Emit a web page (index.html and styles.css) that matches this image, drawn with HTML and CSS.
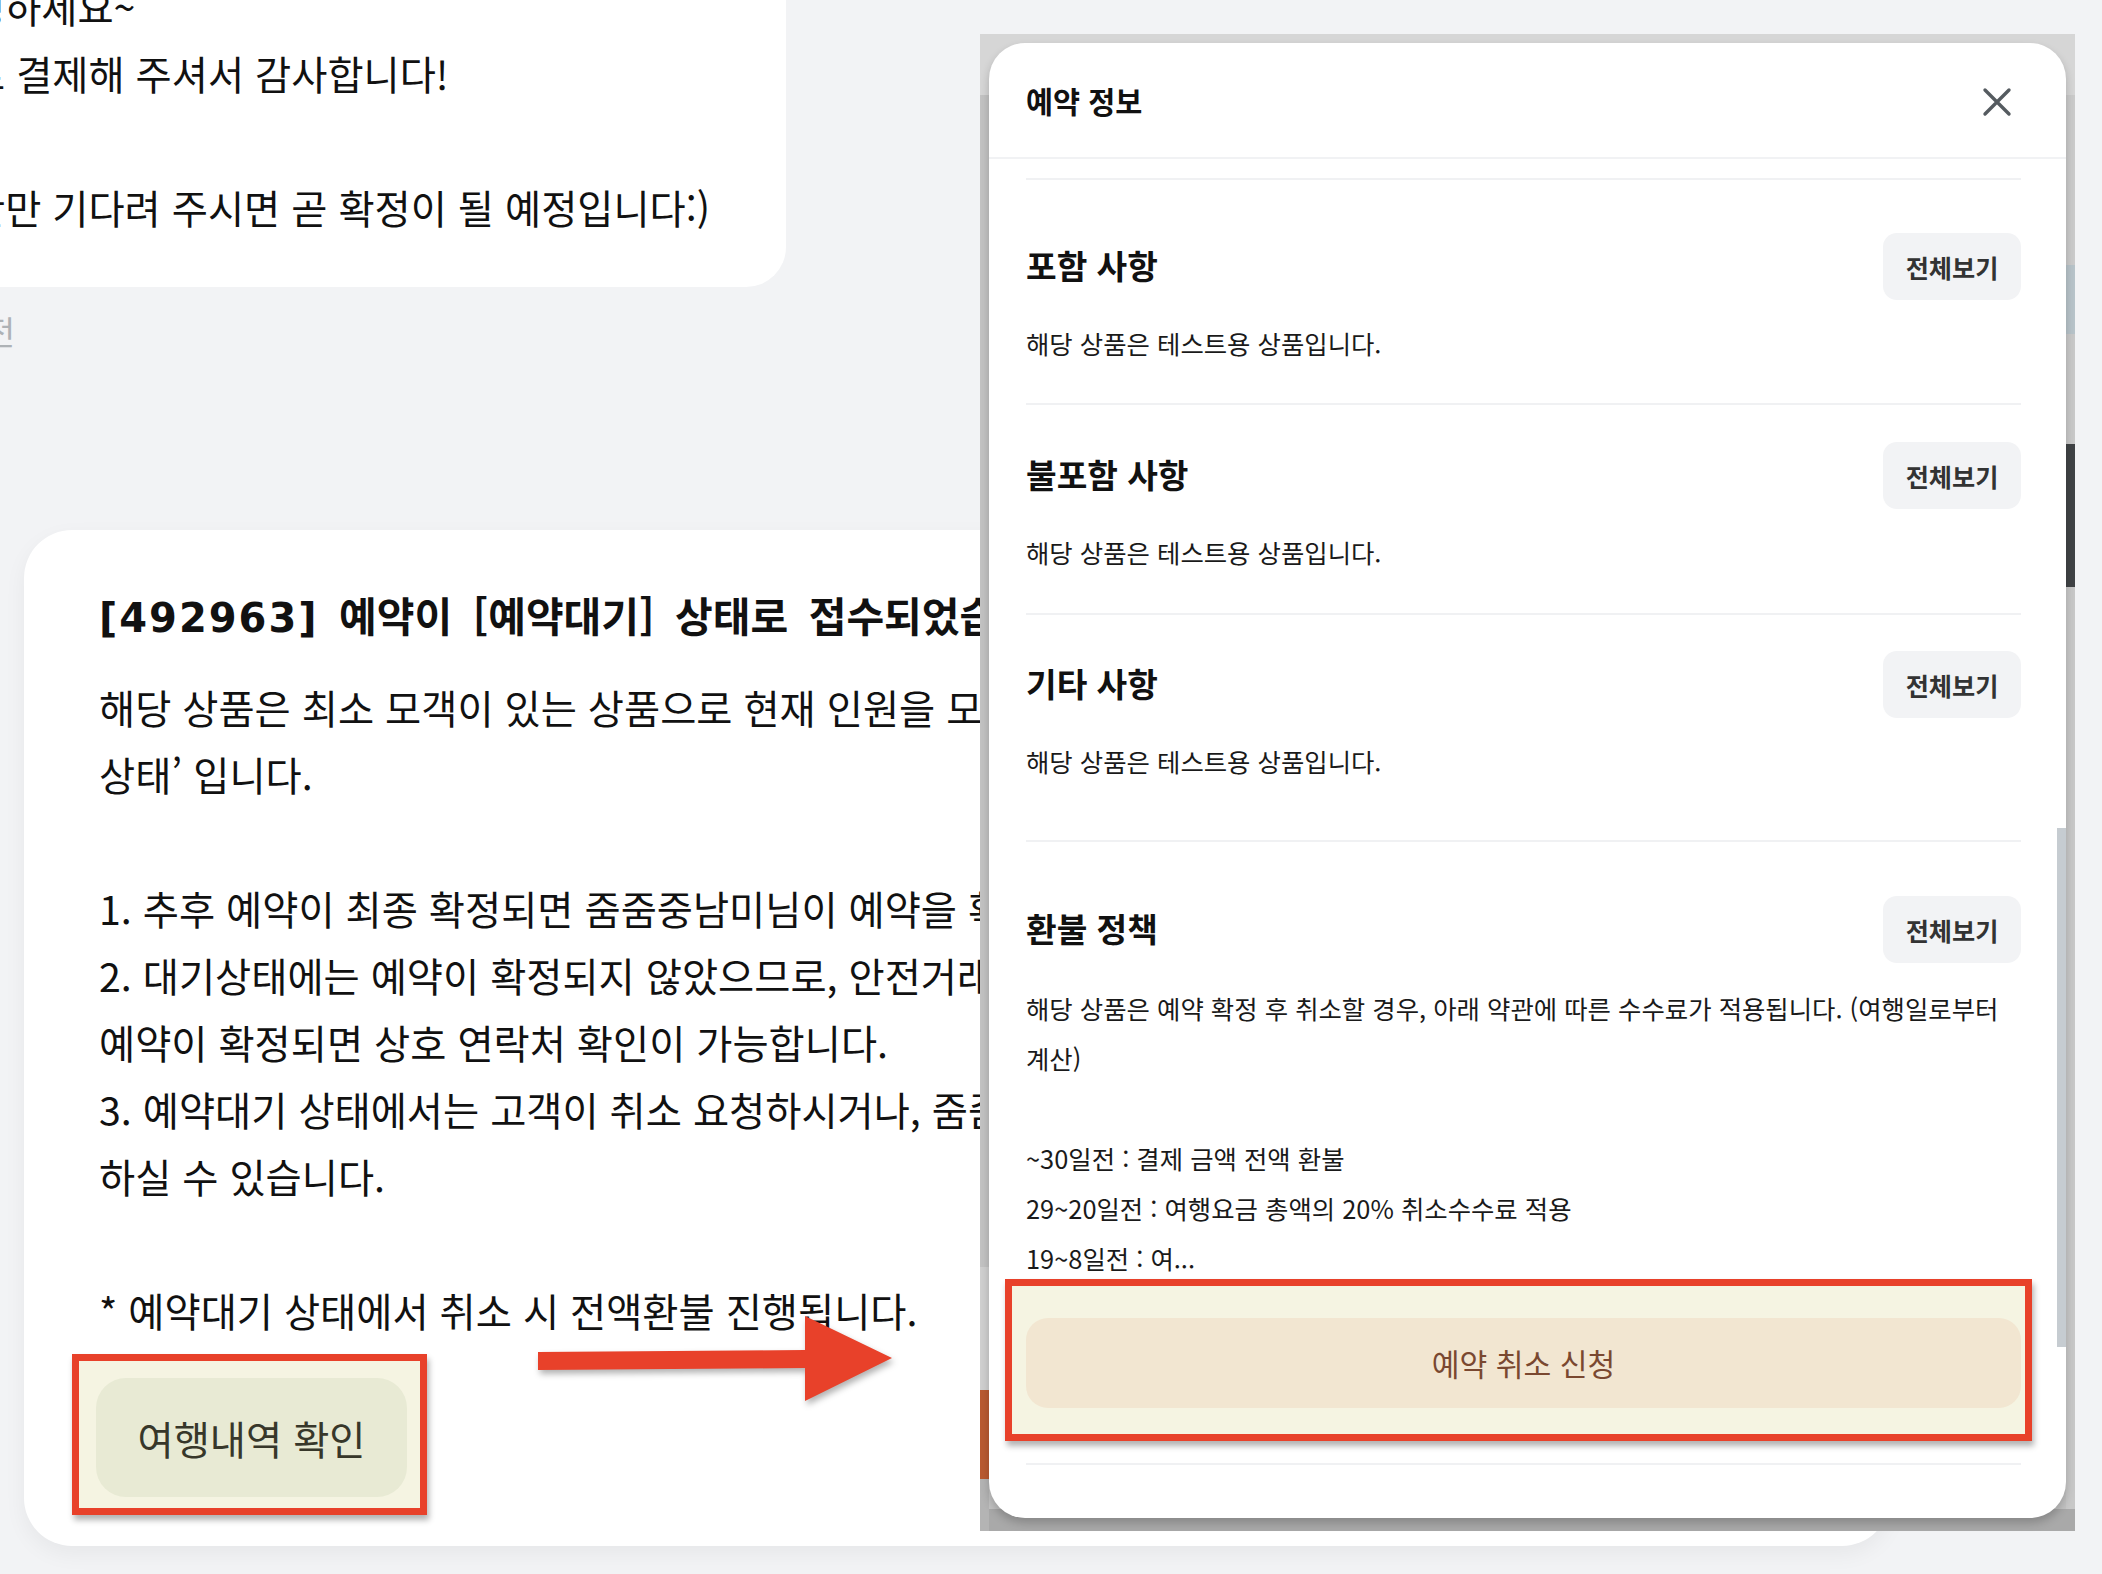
FILE: index.html
```html
<!DOCTYPE html>
<html lang="ko">
<head>
<meta charset="utf-8">
<title>예약 정보</title>
<link rel="stylesheet" href="styles.css">
</head>
<body>
<div class="page">
  <div class="chat">
    <div class="bubble">
      <p class="line">녕하세요~</p>
      <p class="line">로 결제해 주셔서 감사합니다!</p>
      <p class="line">&nbsp;</p>
      <p class="line">깐만 기다려 주시면 곧 확정이 될 예정입니다:)</p>
    </div>
    <div class="time">1분 전</div>
    <div class="card">
      <h2 class="card-title"><span class="num">[492963]</span> 예약이 [예약대기] 상태로 접수되었습니다.</h2>
      <div class="card-body">
        <p class="line">해당 상품은 최소 모객이 있는 상품으로 현재 인원을 모집 중인 ‘예약대기</p>
        <p class="line">상태’ 입니다.</p>
        <p class="line">&nbsp;</p>
        <p class="line">1. 추후 예약이 최종 확정되면 줌줌중남미님이 예약을 확정하였다는 알림을 드립니다.</p>
        <p class="line">2. 대기상태에는 예약이 확정되지 않았으므로, 안전거래를 위해 연락처가 공개되지 않습니다.</p>
        <p class="line">예약이 확정되면 상호 연락처 확인이 가능합니다.</p>
        <p class="line">3. 예약대기 상태에서는 고객이 취소 요청하시거나, 줌줌중남미님이 예약을 취소</p>
        <p class="line">하실 수 있습니다.</p>
        <p class="line">&nbsp;</p>
        <p class="line">* 예약대기 상태에서 취소 시 전액환불 진행됩니다.</p>
      </div>
      <div class="mark mark-trip">
        <div class="trip-btn">여행내역 확인</div>
      </div>
    </div>
  </div>

  <svg class="arrow" width="380" height="115" viewBox="0 0 380 115">
    <polygon points="8,49 275,47 275,13 362,55 275,98 275,65 8,67" fill="#e8412a"/>
  </svg>

  <div class="shot">
    <div class="shot-left"></div>
    <div class="shot-right"></div>
    <div class="modal">
      <div class="modal-head">
        <h3 class="modal-title">예약 정보</h3>
        <svg class="close" width="30" height="30" viewBox="0 0 30 30">
          <path d="M3 3 L27 27 M27 3 L3 27" stroke="#555b60" stroke-width="3.4" stroke-linecap="round" fill="none"/>
        </svg>
      </div>
      <div class="modal-body">
        <div class="sec sec-1">
          <div class="sec-head">
            <h4 class="sec-title">포함 사항</h4>
            <div class="more">전체보기</div>
          </div>
          <div class="sec-text">해당 상품은 테스트용 상품입니다.</div>
        </div>
        <div class="sec sec-2">
          <div class="sec-head">
            <h4 class="sec-title">불포함 사항</h4>
            <div class="more">전체보기</div>
          </div>
          <div class="sec-text">해당 상품은 테스트용 상품입니다.</div>
        </div>
        <div class="sec sec-3">
          <div class="sec-head">
            <h4 class="sec-title">기타 사항</h4>
            <div class="more">전체보기</div>
          </div>
          <div class="sec-text">해당 상품은 테스트용 상품입니다.</div>
        </div>
        <div class="sec sec-4">
          <div class="sec-head">
            <h4 class="sec-title">환불 정책</h4>
            <div class="more">전체보기</div>
          </div>
          <div class="sec-text">
            <p class="line">해당 상품은 예약 확정 후 취소할 경우, 아래 약관에 따른 수수료가 적용됩니다. (여행일로부터</p>
            <p class="line">계산)</p>
            <p class="line">&nbsp;</p>
            <p class="line">~30일전 : 결제 금액 전액 환불</p>
            <p class="line">29~20일전 : 여행요금 총액의 20% 취소수수료 적용</p>
            <p class="line">19~8일전 : 여...</p>
          </div>
          <div class="mark mark-cancel">
            <div class="cancel-btn">예약 취소 신청</div>
          </div>
          <div class="end-line"></div>
        </div>
      </div>
      <div class="scroll-thumb"></div>
    </div>
  </div>
</div>
</body>
</html>
```

FILE: styles.css
```css
* { box-sizing: border-box; }

html, body {
  margin: 0;
  padding: 0;
}

body {
  background: #f2f3f5;
  font-family: "Noto Sans CJK KR", "Noto Sans", sans-serif;
  color: #111;
}

.page {
  position: relative;
  width: 2102px;
  height: 1574px;
  overflow: hidden;
}

.chat {
  display: flex;
  flex-direction: column;
  align-items: flex-start;
}

.line {
  margin: 0;
  white-space: nowrap;
}

/* first (older) chat bubble, partly scrolled out of view */
.bubble {
  width: 886px;
  margin: -68px 0 0 -100px;
  padding: 40px 0 47px 69px;
  background: #fff;
  border-radius: 40px;
  font-size: 39.3px;
  line-height: 67px;
  color: #111;
}

.time {
  width: 200px;
  margin: 22px 0 0 -185px;
  text-align: right;
  font-size: 33px;
  line-height: 45px;
  color: #aeb2b6;
}

/* system message card */
.card {
  width: 1866px;
  height: 1016px;
  margin: 176px 0 0 24px;
  padding: 54px 75px 0;
  background: #fff;
  border-radius: 48px;
  box-shadow: 0 8px 22px rgba(0, 0, 0, 0.05);
  overflow: hidden;
  display: flex;
  flex-direction: column;
  align-items: flex-start;
}

.card-title {
  margin: 0;
  font-size: 41px;
  line-height: 60px;
  font-weight: 700;
  white-space: nowrap;
  word-spacing: 9px;
  color: #111;
}

.card-title .num {
  font-family: "DejaVu Sans", "Noto Sans CJK KR", sans-serif;
  font-size: 40px;
  letter-spacing: 2px;
}

.card-body {
  margin-top: 25px;
  font-size: 39.3px;
  line-height: 67px;
  color: #111;
}

/* red annotation boxes */
.mark {
  border: 7px solid #e8412a;
  background: #f5f4e2;
  box-shadow: 2px 5px 6px rgba(0, 0, 0, 0.3);
}

.mark-trip {
  margin: 11px 0 0 -27px;
  padding: 17px 13px 11px 17px;
}

.trip-btn {
  width: 311px;
  height: 119px;
  border-radius: 30px;
  background: #e8ead4;
  font-size: 39.3px;
  color: #37372a;
  display: flex;
  align-items: center;
  justify-content: center;
}

.arrow {
  position: absolute;
  left: 530px;
  top: 1303px;
  filter: drop-shadow(2px 4px 3px rgba(0, 0, 0, 0.3));
}

/* overlaid screenshot of the reservation sheet */
.shot {
  position: absolute;
  left: 980px;
  top: 34px;
  width: 1095px;
  height: 1497px;
  padding: 9px 9px 13px 9px;
  background: linear-gradient(to bottom, #d6d6d6 0, #d6d6d6 61px, #c3c3c3 61px, #c3c3c3 calc(100% - 22px), #a9a9a9 calc(100% - 22px));
  display: flex;
}

.shot-left,
.shot-right {
  position: absolute;
  top: 0;
  width: 9px;
  height: 100%;
}

.shot-left {
  left: 0;
  background: linear-gradient(to bottom, #d6d6d6 0, #d6d6d6 61px, #c3c3c3 61px, #c3c3c3 1233px, #d0d0d0 1233px, #d0d0d0 1356px, #b95a31 1356px, #b95a31 1445px, #b4b4b4 1445px);
}

.shot-right {
  right: 0;
  background: linear-gradient(to bottom, #d6d6d6 0, #d6d6d6 61px, #cbcbcb 61px, #cbcbcb 231px, #b8c4ca 231px, #b8c4ca 300px, #c9c9c9 300px, #c9c9c9 410px, #404346 410px, #404346 553px, #c8c8c8 553px, #c8c8c8 calc(100% - 22px), #a9a9a9 calc(100% - 22px));
}

.modal {
  position: relative;
  flex: 1;
  background: #fff;
  border-radius: 36px;
  overflow: hidden;
  display: flex;
  flex-direction: column;
  box-shadow: 0 5px 10px rgba(0, 0, 0, 0.2);
}

.modal-head {
  flex: none;
  height: 116px;
  border-bottom: 2px solid #f1f2f4;
  display: flex;
  align-items: center;
  justify-content: space-between;
  padding: 0 54px 0 37px;
}

.modal-title {
  margin: 0;
  font-size: 29.4px;
  font-weight: 700;
  color: #111;
}

.close {
  display: block;
  margin-top: 3px;
}

.modal-body {
  padding: 19px 45px 0 37px;
}

.sec {
  border-top: 2px solid #f0f1f3;
}

.sec-1 { padding: 53px 0 35px; }
.sec-2 { padding: 37px 0 36px; }
.sec-3 { padding: 36px 0 54px; }
.sec-4 { padding: 54px 0 0; }

.sec-head {
  height: 67px;
  display: flex;
  align-items: center;
  justify-content: space-between;
}

.sec-title {
  margin: -4px 0 0;
  font-size: 33.3px;
  font-weight: 700;
  color: #111;
}

.more {
  width: 138px;
  height: 67px;
  border-radius: 14px;
  background: #f2f3f5;
  font-size: 25.2px;
  font-weight: 700;
  color: #333;
  display: flex;
  align-items: center;
  justify-content: center;
}

.sec-text {
  margin-top: 18px;
  font-size: 25.4px;
  line-height: 50px;
  color: #1a1a1a;
}

.sec-4 .sec-text {
  margin-top: 20px;
}

.mark-cancel {
  margin: -4px -11px 0 -21px;
  padding: 32px 4px 26px 14px;
}

.cancel-btn {
  height: 90px;
  border-radius: 22px;
  background: #f2e6d1;
  color: #7a4830;
  font-size: 30.2px;
  display: flex;
  align-items: center;
  justify-content: center;
}

.end-line {
  margin-top: 22px;
  border-top: 2px solid #f0f1f3;
}

.scroll-thumb {
  position: absolute;
  right: 0;
  top: 785px;
  width: 9px;
  height: 519px;
  background: #c6ccd1;
}
```
